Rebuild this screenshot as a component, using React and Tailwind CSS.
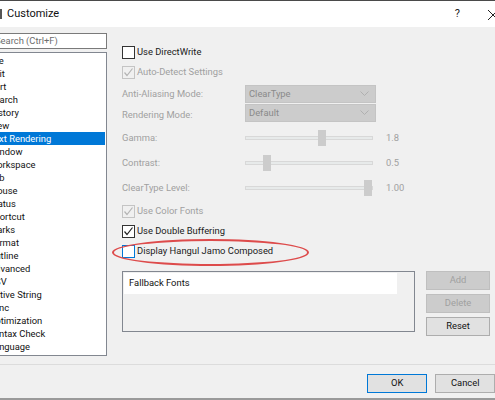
import React from "react";

const categories = [
  "File",
  "Edit",
  "Sort",
  "Search",
  "History",
  "View",
  "Text Rendering",
  "Window",
  "Workspace",
  "Tab",
  "Mouse",
  "Status",
  "Shortcut",
  "Marks",
  "Format",
  "Outline",
  "Advanced",
  "CSV",
  "Active String",
  "Sync",
  "Optimization",
  "Syntax Check",
  "Language",
];

function Check({ color }) {
  return (
    <svg width="11" height="11" viewBox="0 0 11 11" className="block">
      <polyline
        points="1.5,5.5 4,8.5 9.5,1.5"
        fill="none"
        stroke={color}
        strokeWidth="1.2"
      />
    </svg>
  );
}

function CheckRow({ label, checked, disabled, focus, className = "" }) {
  const box = focus
    ? "border-[#0078d7] bg-white"
    : disabled
    ? "border-[#c4c4c4] bg-[#f0f0f0]"
    : "border-[#333333] bg-white";
  return (
    <div className={`flex items-center h-[14px] ${className}`}>
      <div
        className={`w-[13px] h-[13px] border flex items-center justify-center shrink-0 ${box}`}
      >
        {checked && <Check color={disabled ? "#b4b4b4" : "#222222"} />}
      </div>
      <span
        className={`ml-[2px] leading-none ${
          disabled ? "text-[#a0a0a0]" : "text-[#1a1a1a]"
        }`}
      >
        {label}
      </span>
    </div>
  );
}

function Combo({ value, className = "" }) {
  return (
    <div
      className={`w-[131px] h-[18px] bg-[#cccccc] border border-[#c4c4c4] flex items-center justify-between pl-[3px] pr-[6px] text-[#8a8a8a] ${className}`}
    >
      <span className="leading-none">{value}</span>
      <svg width="9" height="6" viewBox="0 0 9 6">
        <polyline
          points="0.5,0.5 4.5,4.5 8.5,0.5"
          fill="none"
          stroke="#b0b0b0"
          strokeWidth="1"
        />
      </svg>
    </div>
  );
}

function Slider({ label, value, thumb, className = "" }) {
  return (
    <div className={`flex items-center h-[16px] ${className}`}>
      <span className="w-[123px] text-[#a0a0a0] leading-none">{label}</span>
      <div className="relative w-[128px] h-[16px] flex items-center">
        <div className="w-full h-[4px] bg-[#e7eaea] border border-[#d8d8d8]" />
        <div
          className="absolute top-0 w-[8px] h-[16px] bg-[#cccccc]"
          style={{ left: thumb }}
        />
      </div>
      <span className="ml-[13px] text-[#a0a0a0] leading-none">{value}</span>
    </div>
  );
}

export default function App() {
  return (
    <div
      className="relative w-[495px] h-[400px] overflow-hidden bg-[#f0f0f0] text-[9.4px]"
      style={{ fontFamily: 'Roboto, "Noto Sans", sans-serif' }}
    >
      {/* window edge */}
      <div className="h-[1px] bg-[#4a4a4a]" />

      {/* title bar */}
      <div className="h-[26px] bg-white flex items-center relative">
        <div className="w-[2px] h-[10px] bg-[#555] ml-0" />
        <span className="ml-[5px] text-[11px] text-[#111]">Customize</span>
        <span className="ml-auto mr-[35px] text-[11px] text-[#222]">?</span>
        <svg
          width="10"
          height="10"
          viewBox="0 0 10 10"
          className="absolute left-[488px] top-[9px]"
        >
          <line x1="0" y1="0" x2="10" y2="10" stroke="#222" strokeWidth="1" />
          <line x1="10" y1="0" x2="0" y2="10" stroke="#222" strokeWidth="1" />
        </svg>
      </div>

      {/* body */}
      <div className="flex h-[337px]">
        {/* left column */}
        <div className="ml-[-20px] w-[127px] pt-[6px] shrink-0 flex flex-col">
          <div className="h-[16px] bg-white border border-[#7a7a7a] flex items-center pl-[14px] text-[#6d6d6d]">
            Search (Ctrl+F)
          </div>
          <div className="mt-[3px] h-[304px] bg-white border border-[#828790] pt-[1px] pr-[1px] overflow-hidden">
            {categories.map((c, i) => (
              <div
                key={c}
                className={`h-[13px] flex items-center pl-[8px] leading-none ${
                  i === 6 ? "bg-[#0078d7] text-white" : "text-[#111]"
                }`}
              >
                {c}
              </div>
            ))}
          </div>
        </div>

        {/* right panel */}
        <div className="ml-[15px] flex-1 pt-[18px] flex flex-col">
          <CheckRow label="Use DirectWrite" />
          <CheckRow
            label="Auto-Detect Settings"
            checked
            disabled
            className="mt-[6px]"
          />
          <div className="mt-[6px] flex items-center">
            <span className="w-[123px] text-[#a0a0a0] leading-none">
              Anti-Aliasing Mode:
            </span>
            <Combo value="ClearType" />
          </div>
          <div className="mt-[1px] flex items-center">
            <span className="w-[123px] text-[#a0a0a0] leading-none pt-[4px]">
              Rendering Mode:
            </span>
            <Combo value="Default" />
          </div>
          <Slider label="Gamma:" value="1.8" thumb={73} className="mt-[8px]" />
          <Slider label="Contrast:" value="0.5" thumb={18} className="mt-[9px]" />
          <Slider
            label="ClearType Level:"
            value="1.00"
            thumb={119}
            className="mt-[9px]"
          />
          <CheckRow
            label="Use Color Fonts"
            checked
            disabled
            className="mt-[8px]"
          />
          <CheckRow label="Use Double Buffering" checked className="mt-[6px]" />
          <CheckRow
            label="Display Hangul Jamo Composed"
            focus
            className="mt-[6px]"
          />

          <div className="mt-[13px] flex">
            <div className="w-[293px] h-[61px] border border-[#828790] bg-[#f0f0f0] p-[1px] flex flex-col">
              <div className="w-[273px] h-[21px] bg-white flex items-center pl-[5px] text-[#111]">
                Fallback Fonts
              </div>
            </div>
            <div className="ml-[11px] flex flex-col gap-[4px]">
              <div className="w-[64px] h-[19px] bg-[#cccccc] border border-[#bfbfbf] flex items-center justify-center text-[#a0a0a0]">
                Add
              </div>
              <div className="w-[64px] h-[19px] bg-[#cccccc] border border-[#bfbfbf] flex items-center justify-center text-[#a0a0a0]">
                Delete
              </div>
              <div className="w-[64px] h-[19px] bg-[#e1e1e1] border border-[#adadad] flex items-center justify-center text-[#111]">
                Reset
              </div>
            </div>
          </div>
        </div>
      </div>

      {/* footer */}
      <div className="h-[1px] bg-[#dcdcdc]" />
      <div className="h-[33px] flex items-start pt-[9px]">
        <div className="ml-[367px] w-[63px] h-[19px] bg-[#e1e1e1] border border-[#0078d7] flex items-center justify-center text-[#111]">
          OK
        </div>
        <div className="ml-[8px] w-[62px] h-[19px] bg-[#e1e1e1] border border-[#adadad] flex items-center justify-center text-[#111]">
          Cancel
        </div>
      </div>
      <div className="h-[2px] bg-[#9a9a9a]" />

      {/* red annotation ellipse */}
      <div className="absolute left-[112px] top-[239px] w-[197px] h-[27px] rounded-[50%] border-[2.5px] border-[#dd4b4b]" />
    </div>
  );
}
